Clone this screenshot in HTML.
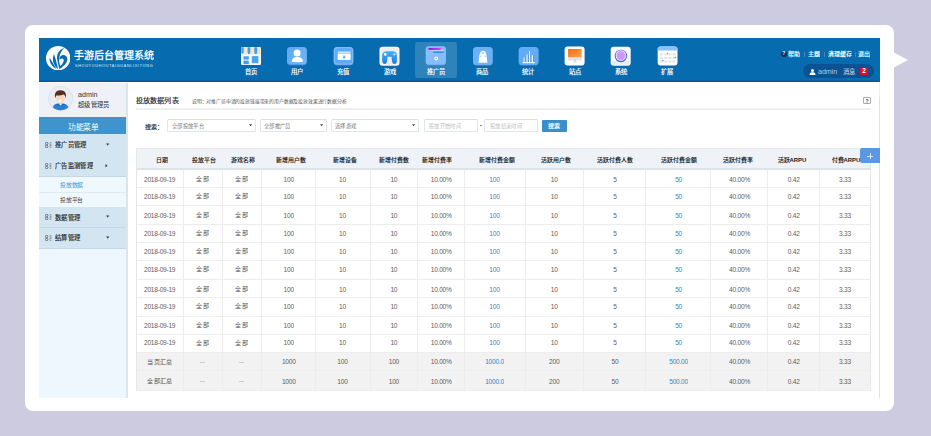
<!DOCTYPE html><html lang="zh-CN"><head><meta charset="utf-8"><style>
*{margin:0;padding:0;box-sizing:border-box}
html,body{width:931px;height:436px;overflow:hidden;background:#cccbdf;font-family:"Liberation Sans", sans-serif}
.a{position:absolute}
.t{position:absolute;white-space:nowrap;line-height:1}
</style></head><body>
<div class="a" style="left:25px;top:25px;width:869px;height:386px;background:#fff;border-radius:8px"></div>
<svg class="a" style="left:893px;top:50px" width="16" height="20"><path d="M0 2 L15 10 L0 18 Z" fill="#fff"/></svg>
<div class="a" style="left:39px;top:38px;width:841px;height:44px;background:#066caf"></div>
<div class="a" style="left:39px;top:80px;width:841px;height:2px;background:linear-gradient(#0a62a8,#0452a0)"></div>
<svg class="a" style="left:45.9px;top:45.8px" width="24.4" height="24.4" viewBox="0 0 24 24">
<circle cx="12" cy="12" r="12" fill="#fff"/>
<path d="M17.8 1.8 C13.5 3.5 10.6 7.5 10.9 11.8 C11.1 15.3 12.3 19 13.2 23 C16.5 20 20.8 17.5 21 13 C21.2 10 18.5 8.3 15.8 9 C13.8 9.6 12.8 11.5 13.5 13.5 C14.5 12 16.5 11.8 17.3 13.2 C18 15.5 15.8 18 14 19.8 C13 16.5 12.5 13.5 13.2 10.5 C14 7 15.8 4.3 17.8 1.8Z" fill="#066caf"/>
<path d="M7.8 7.6 Q4.3 16.5 12 23.2 Q10.4 15 7.8 7.6Z" fill="#066caf"/>
<path d="M3.5 11.6 Q3 18.6 10.4 23 Q7.2 17.2 3.5 11.6Z" fill="#066caf"/>
</svg>
<div class="t" style="left:73.75px;top:51.30px;font-size:50px;font-weight:bold;color:#fff;letter-spacing:0.00px;transform:scale(0.2000);transform-origin:0 0;">手游后台管理系统</div>
<div class="t" style="left:74.80px;top:64.15px;font-size:50px;font-weight:normal;color:#e8f0fa;letter-spacing:9.73px;transform:scale(0.0740);transform-origin:0 0;">SHOUYOUHOUTAIGUANLIXITONG</div>
<div class="a" style="left:415px;top:42px;width:42px;height:35.5px;background:rgba(255,255,255,0.16);border-radius:3px"></div>
<svg class="a" style="left:241.0px;top:47px" width="20" height="19" viewBox="0 0 20 19" overflow="visible"><rect x="0" y="0" width="20" height="18" rx="1.5" fill="#fdf9f0"/>
<rect x="0.3" y="0.3" width="19.4" height="6.2" fill="#f6e3c2"/>
<path d="M0.3 0.3 h2.4 v5.3 a1.2 1.2 0 0 1 -2.4 0 Z M6.6 0.3 h2.7 v5.5 a1.35 1.35 0 0 1 -2.7 0 Z M13.3 0.3 h2.8 v5.5 a1.4 1.4 0 0 1 -2.8 0 Z" fill="#3a9ff4"/>
<path d="M2.7 5.6 a1.95 1.95 0 0 0 3.9 0 M9.3 5.8 a2 2 0 0 0 4 0 M16.1 5.8 a1.8 1.8 0 0 0 3.6 0" fill="#f6e3c2"/>
<rect x="2.5" y="9.3" width="5.3" height="3.3" fill="#3aa0f5"/><rect x="2.5" y="13.6" width="5.3" height="3.6" fill="#3aa0f5"/>
<circle cx="4.7" cy="10.9" r="0.6" fill="#ef7a6a"/>
<rect x="10.8" y="9.1" width="6.6" height="7.1" fill="#44a6f6"/></svg>
<div class="t" style="left:230.60px;top:68.55px;width:317.5px;text-align:center;font-size:50px;font-weight:bold;color:#fff;letter-spacing:0.00px;transform:scale(0.1260);transform-origin:0 0;">首页</div>
<svg class="a" style="left:287.3px;top:47px" width="20" height="19" viewBox="0 0 20 19" overflow="visible"><defs><linearGradient id="g1" x1="0" y1="0" x2="1" y2="1"><stop offset="0" stop-color="#5aa6ee"/><stop offset="1" stop-color="#72b9f8"/></linearGradient></defs>
<rect x="0" y="0" width="19.8" height="18.4" rx="3.5" fill="#3f82d2"/><rect x="0" y="0" width="19.8" height="17.6" rx="3.5" fill="url(#g1)"/>
<circle cx="10.1" cy="6.1" r="3.5" fill="#fff"/><path d="M4.8 14.9 C4.8 11.3 7 10.1 10.3 10.1 C13.6 10.1 15.9 11.3 15.9 14.9 Z" fill="#fff"/></svg>
<div class="t" style="left:276.90px;top:68.55px;width:317.5px;text-align:center;font-size:50px;font-weight:bold;color:#fff;letter-spacing:0.00px;transform:scale(0.1260);transform-origin:0 0;">用户</div>
<svg class="a" style="left:333.6px;top:47px" width="20" height="19" viewBox="0 0 20 19" overflow="visible"><rect x="-0.3" y="0" width="19.6" height="18.6" rx="3.5" fill="#4f90dc"/><rect x="-0.3" y="0" width="19.6" height="17.8" rx="3.5" fill="#7cbaf8"/><rect x="1" y="1.2" width="17" height="15.4" rx="2.5" fill="#62a8f2"/>
<rect x="3.7" y="4.6" width="12.9" height="1.1" fill="#fff"/><rect x="3.7" y="6.5" width="12.9" height="6.4" rx="0.4" fill="#fff"/>
<path d="M8.9 8.2 L9.7 9 M11.4 8.2 L10.6 9" stroke="#5aa2ee" stroke-width="0.5"/><ellipse cx="10.15" cy="10.2" rx="1.1" ry="1.3" fill="#5aa2ee"/></svg>
<div class="t" style="left:323.20px;top:68.55px;width:317.5px;text-align:center;font-size:50px;font-weight:bold;color:#fff;letter-spacing:0.00px;transform:scale(0.1260);transform-origin:0 0;">充值</div>
<svg class="a" style="left:379.9px;top:47px" width="20" height="19" viewBox="0 0 20 19" overflow="visible"><defs><linearGradient id="g2" x1="0" y1="0" x2="0" y2="1"><stop offset="0" stop-color="#3fb2fb"/><stop offset="1" stop-color="#1a7ae6"/></linearGradient></defs>
<rect x="-0.5" y="-0.2" width="20" height="19" rx="3" fill="#fdfaf6"/><rect x="0.8" y="1" width="17.5" height="16.6" rx="2" fill="#efece9"/>
<path d="M2.2 8.3 C2.2 5.4 4.3 4.3 6.8 4.3 H12.3 C14.8 4.3 16.9 5.4 16.9 8.3 V13.5 C16.9 16.3 15.6 17 14.4 17 C13 17 12.3 16 12 14 L11.6 9.8 H7.5 L7.1 14 C6.8 16 6.1 17 4.7 17 C3.5 17 2.2 16.3 2.2 13.5 Z" fill="url(#g2)"/>
<circle cx="5.3" cy="7.4" r="1.3" fill="#fff"/><path d="M14.2 5.9 v3 M12.7 7.4 h3" stroke="#e6f4ff" stroke-width="0.6"/></svg>
<div class="t" style="left:369.50px;top:68.55px;width:317.5px;text-align:center;font-size:50px;font-weight:bold;color:#fff;letter-spacing:0.00px;transform:scale(0.1260);transform-origin:0 0;">游戏</div>
<svg class="a" style="left:426.2px;top:47px" width="20" height="19" viewBox="0 0 20 19" overflow="visible"><defs><linearGradient id="g3" x1="0" y1="0" x2="1" y2="0"><stop offset="0" stop-color="#8a1ee0"/><stop offset="0.7" stop-color="#c240e6"/><stop offset="1" stop-color="#f1a6f0"/></linearGradient></defs>
<rect x="-0.3" y="-0.8" width="20.2" height="19.2" rx="3" fill="#4d8ad8"/><rect x="-0.3" y="-0.8" width="20.2" height="18.5" rx="3" fill="#85bcfa"/>
<path d="M2.5 1.1 H16.6 L17.6 3.2 H2.5 Z" fill="url(#g3)"/><rect x="2.5" y="3.2" width="15.2" height="0.7" fill="#c9f0ff"/>
<rect x="7.2" y="4.4" width="10.6" height="1.7" fill="#3d8cf2"/>
<path d="M0 6.6 H19.6" stroke="#a8d0fc" stroke-width="0.4"/>
<circle cx="10.2" cy="11.5" r="1.9" fill="#fff"/><ellipse cx="10.2" cy="11.5" rx="0.5" ry="0.8" fill="#4a7fd0"/></svg>
<div class="t" style="left:415.80px;top:68.55px;width:317.5px;text-align:center;font-size:50px;font-weight:bold;color:#fff;letter-spacing:0.00px;transform:scale(0.1260);transform-origin:0 0;">推广员</div>
<svg class="a" style="left:472.5px;top:47px" width="20" height="19" viewBox="0 0 20 19" overflow="visible"><rect x="0" y="0" width="19.7" height="18.8" rx="3.5" fill="#3f82d2"/><rect x="0" y="0" width="19.7" height="18" rx="3.5" fill="#6cb1f4"/>
<path d="M5.5 15.7 L6.5 7.5 Q6.7 6.6 7.6 6.6 H12.3 Q13.2 6.6 13.4 7.5 L14.4 15.7 Z" fill="#fff"/>
<path d="M7.7 7.2 C7.7 3.6 12.3 3.6 12.3 7.2" stroke="#fff" stroke-width="1.4" fill="none"/>
<circle cx="7.8" cy="9.2" r="0.6" fill="#6cb1f4"/><circle cx="12.1" cy="9.2" r="0.6" fill="#6cb1f4"/></svg>
<div class="t" style="left:462.10px;top:68.55px;width:317.5px;text-align:center;font-size:50px;font-weight:bold;color:#fff;letter-spacing:0.00px;transform:scale(0.1260);transform-origin:0 0;">商品</div>
<svg class="a" style="left:518.8px;top:47px" width="20" height="19" viewBox="0 0 20 19" overflow="visible"><rect x="-0.3" y="0" width="19.8" height="18.8" rx="3.5" fill="#3f82d2"/><rect x="-0.3" y="0" width="19.8" height="18" rx="3.5" fill="#62acf3"/>
<rect x="4.6" y="10.5" width="1.2" height="4.6" fill="#fff"/><rect x="5.8" y="10.5" width="0.5" height="4.6" fill="#2f78d8"/>
<rect x="7.5" y="7.4" width="1.3" height="7.7" fill="#fff"/><rect x="8.8" y="7.4" width="0.5" height="7.7" fill="#2f78d8"/>
<rect x="10.1" y="4" width="1.4" height="11.1" fill="#fff"/><rect x="11.5" y="4" width="0.5" height="11.1" fill="#2f78d8"/>
<rect x="12.8" y="8.2" width="1.3" height="6.9" fill="#fff"/><rect x="14.1" y="8.2" width="0.5" height="6.9" fill="#2f78d8"/>
<rect x="3.6" y="15.1" width="12.2" height="1.1" fill="#fff"/></svg>
<div class="t" style="left:508.40px;top:68.55px;width:317.5px;text-align:center;font-size:50px;font-weight:bold;color:#fff;letter-spacing:0.00px;transform:scale(0.1260);transform-origin:0 0;">统计</div>
<svg class="a" style="left:565.1px;top:47px" width="20" height="19" viewBox="0 0 20 19" overflow="visible"><defs><linearGradient id="g4" x1="0" y1="0" x2="1" y2="1"><stop offset="0" stop-color="#f86a10"/><stop offset="1" stop-color="#fca455"/></linearGradient></defs>
<rect x="-0.4" y="-0.5" width="20" height="19" rx="3" fill="#fdfdfd"/>
<rect x="3.1" y="2" width="13.5" height="8.6" fill="url(#g4)"/><rect x="3.1" y="10.6" width="13.5" height="2.2" fill="#e9e9e9"/>
<path d="M3.1 12.8 H16.6" stroke="#bdbdbd" stroke-width="0.5"/><rect x="9" y="12.8" width="1.8" height="1.8" fill="#d0d0d0"/><rect x="7.8" y="14.8" width="4" height="0.7" fill="#dadada"/></svg>
<div class="t" style="left:554.70px;top:68.55px;width:317.5px;text-align:center;font-size:50px;font-weight:bold;color:#fff;letter-spacing:0.00px;transform:scale(0.1260);transform-origin:0 0;">站点</div>
<svg class="a" style="left:611.4px;top:47px" width="20" height="19" viewBox="0 0 20 19" overflow="visible"><defs><pattern id="p1" width="1.4" height="1.4" patternUnits="userSpaceOnUse"><rect width="1.4" height="1.4" fill="#c88af2"/><circle cx="0.7" cy="0.7" r="0.35" fill="#e9d2fb"/></pattern></defs>
<rect x="-0.3" y="-0.3" width="20" height="19" rx="3" fill="#fbfbfd"/><rect x="1" y="14" width="17.5" height="3.8" fill="#e8ebf2"/>
<circle cx="9.9" cy="9" r="6.2" fill="#3c68d6"/><circle cx="9.9" cy="8.6" r="5.3" fill="#f3ecfc"/><circle cx="9.9" cy="8.6" r="4.4" fill="url(#p1)"/></svg>
<div class="t" style="left:601.00px;top:68.55px;width:317.5px;text-align:center;font-size:50px;font-weight:bold;color:#fff;letter-spacing:0.00px;transform:scale(0.1260);transform-origin:0 0;">系统</div>
<svg class="a" style="left:657.7px;top:47px" width="20" height="19" viewBox="0 0 20 19" overflow="visible"><rect x="-0.3" y="-0.5" width="19.8" height="19" rx="3" fill="#fdfdfe"/>
<path d="M-0.3 2.5 a3 3 0 0 1 3 -3 h13.8 a3 3 0 0 1 3 3 v1 h-19.8 Z" fill="#8fbff8"/>
<g fill="#e1e1e1"><rect x="2" y="6.5" width="3" height="1.8"/><rect x="6.3" y="6.5" width="3" height="1.8"/><rect x="10.5" y="6.5" width="3" height="1.8"/><rect x="14.5" y="6.5" width="3" height="1.8"/>
<rect x="2" y="10" width="3" height="1.8"/><rect x="6.3" y="10" width="3" height="1.8"/><rect x="10.5" y="10" width="3" height="1.8"/><rect x="14.5" y="10" width="3" height="1.8"/>
<rect x="2" y="13.6" width="3" height="1.8"/><rect x="6.3" y="13.6" width="3" height="1.8"/><rect x="10.5" y="13.6" width="3" height="1.8"/><rect x="14.5" y="13.6" width="3" height="1.8"/></g>
<circle cx="9.6" cy="6.5" r="0.7" fill="#5b9cf0"/><circle cx="17.4" cy="10.5" r="0.7" fill="#5b9cf0"/><circle cx="5" cy="13.5" r="0.8" fill="#5b9cf0"/></svg>
<div class="t" style="left:647.30px;top:68.55px;width:317.5px;text-align:center;font-size:50px;font-weight:bold;color:#fff;letter-spacing:0.00px;transform:scale(0.1260);transform-origin:0 0;">扩展</div>
<div class="a" style="left:781px;top:51px;width:5.5px;height:5.5px;border-radius:50%;background:#1c2f4a"></div>
<div class="t" style="left:781px;top:51.4px;width:5.5px;text-align:center;font-size:5px;font-weight:bold;color:#fff">?</div>
<div class="t" style="left:788.35px;top:50.90px;font-size:50px;font-weight:bold;color:#fff;letter-spacing:0.00px;transform:scale(0.1200);transform-origin:0 0;">帮助</div>
<div class="t" style="left:808.15px;top:50.90px;font-size:50px;font-weight:bold;color:#fff;letter-spacing:0.00px;transform:scale(0.1200);transform-origin:0 0;">主题</div>
<div class="t" style="left:827.65px;top:50.90px;font-size:50px;font-weight:bold;color:#fff;letter-spacing:0.00px;transform:scale(0.1200);transform-origin:0 0;">清理缓存</div>
<div class="t" style="left:858.45px;top:50.90px;font-size:50px;font-weight:bold;color:#fff;letter-spacing:0.00px;transform:scale(0.1200);transform-origin:0 0;">退出</div>
<div class="a" style="left:804px;top:51.5px;width:0.6px;height:5px;background:#3d86c4"></div>
<div class="a" style="left:823.7px;top:51.5px;width:0.6px;height:5px;background:#3d86c4"></div>
<div class="a" style="left:854.6px;top:51.5px;width:0.6px;height:5px;background:#3d86c4"></div>
<div class="a" style="left:803px;top:64.4px;width:71px;height:13.3px;border-radius:7px;background:#0b5294"></div>
<svg class="a" style="left:809px;top:68.5px" width="7" height="6" viewBox="0 0 7 6"><circle cx="3.5" cy="1.6" r="1.5" fill="#fff"/><path d="M0.5 6 C0.5 3.6 2 3.3 3.5 3.3 C5 3.3 6.5 3.6 6.5 6Z" fill="#fff"/></svg>
<div class="t" style="left:817.60px;top:68.30px;font-size:50px;font-weight:normal;color:#b5cbe2;letter-spacing:0.00px;transform:scale(0.1400);transform-origin:0 0;">admin</div>
<div class="t" style="left:842.60px;top:68.97px;font-size:50px;font-weight:normal;color:#d3e1f0;letter-spacing:0.00px;transform:scale(0.1250);transform-origin:0 0;">消息</div>
<div class="a" style="left:860px;top:67.8px;width:8px;height:7.5px;background:#e50d0d;border-radius:1px"></div>
<div class="t" style="left:860px;top:68.3px;width:8px;text-align:center;font-size:6.6px;font-weight:bold;color:#fff">2</div>
<div class="a" style="left:39px;top:83px;width:89px;height:315px;background:#eef7fd"></div>
<div class="a" style="left:126px;top:83px;width:2px;height:315px;background:#d9e6ee"></div>
<div class="a" style="left:39px;top:83px;width:87px;height:34px;background:#eef1f8"></div>
<svg class="a" style="left:48px;top:86px" width="25" height="25" viewBox="0 0 25 25">
<circle cx="12.5" cy="12.5" r="12.5" fill="#dfe3e8"/><circle cx="12.5" cy="12.5" r="11.5" fill="#e9ecf0"/>
<path d="M4.8 21.3 C5.6 18.5 8 17.3 12.5 17.3 C17 17.3 19.5 18.5 20.4 21.3 C18.5 23.4 15.5 24.3 12.5 24.3 C9.5 24.3 6.6 23.4 4.8 21.3Z" fill="#2b7fd2"/>
<path d="M8 18.3 C9.5 20 15.5 20 17 18.3 C15.5 17.6 9.5 17.6 8 18.3Z" fill="#1f66b8"/>
<path d="M10.2 17.3 L12.5 19.6 L14.8 17.3 Z" fill="#fdfdfd"/>
<rect x="11" y="15" width="3" height="2.6" fill="#f0c59c"/>
<ellipse cx="12.4" cy="12.3" rx="4.2" ry="4.7" fill="#f9d9b9"/>
<ellipse cx="12" cy="15" rx="2" ry="1.4" fill="#fdf1e6"/>
<path d="M7.3 12.2 C6 7.5 8 4.4 12.3 4.3 C16.6 4.2 18.9 7.2 17.7 12.2 C17.3 10.2 16.6 9.2 15.6 8.6 C13.6 9.6 10.6 9.9 8.6 9.3 C7.9 10.1 7.5 11.1 7.3 12.2Z" fill="#553020"/>
</svg>
<div class="t" style="left:77.60px;top:91.30px;font-size:50px;font-weight:normal;color:#333;letter-spacing:0.00px;transform:scale(0.1440);transform-origin:0 0;">admin</div>
<div class="t" style="left:77.85px;top:101.67px;font-size:50px;font-weight:normal;color:#333;letter-spacing:0.00px;transform:scale(0.1252);transform-origin:0 0;">超级管理员</div>
<div class="a" style="left:39px;top:117px;width:87px;height:17.4px;background:#3e94cb"></div>
<div class="t" style="left:39.80px;top:122.62px;width:561.3px;text-align:center;font-size:50px;font-weight:normal;color:#fff;letter-spacing:0.00px;transform:scale(0.1550);transform-origin:0 0;">功能菜单</div>
<div class="a" style="left:39px;top:134.4px;width:87px;height:21.5px;background:#d3e5f0;border-bottom:1px solid #c3d8e6"></div>
<svg class="a" style="left:45px;top:141.9px" width="7" height="6" viewBox="0 0 7 6"><circle cx="1.6" cy="1.5" r="1.25" fill="none" stroke="#555" stroke-width="0.8"/><circle cx="1.6" cy="4.5" r="1.25" fill="none" stroke="#555" stroke-width="0.8"/><path d="M4.6 0.8h1.8M4.6 2.3h1.8M4.6 3.7h1.8M4.6 5.2h1.8" stroke="#666" stroke-width="0.7"/></svg>
<div class="t" style="left:54.65px;top:142.15px;font-size:50px;font-weight:bold;color:#333;letter-spacing:0.00px;transform:scale(0.1260);transform-origin:0 0;">推广员管理</div>
<svg class="a" style="left:106px;top:142.9px" width="4" height="3"><path d="M0 0.5h3.4L1.7 2.5Z" fill="#333"/></svg>
<div class="a" style="left:39px;top:155.4px;width:87px;height:21.9px;background:#d3e5f0;border-bottom:1px solid #c3d8e6"></div>
<svg class="a" style="left:45px;top:163.1px" width="7" height="6" viewBox="0 0 7 6"><circle cx="1.6" cy="1.5" r="1.25" fill="none" stroke="#555" stroke-width="0.8"/><circle cx="1.6" cy="4.5" r="1.25" fill="none" stroke="#555" stroke-width="0.8"/><path d="M4.6 0.8h1.8M4.6 2.3h1.8M4.6 3.7h1.8M4.6 5.2h1.8" stroke="#666" stroke-width="0.7"/></svg>
<div class="t" style="left:54.65px;top:163.35px;font-size:50px;font-weight:bold;color:#333;letter-spacing:0.00px;transform:scale(0.1260);transform-origin:0 0;">广告监测管理</div>
<svg class="a" style="left:105px;top:164.1px" width="3" height="4"><path d="M0.5 0v3.4L2.5 1.7Z" fill="#333"/></svg>
<div class="a" style="left:39px;top:176.8px;width:87px;height:15.8px;background:#eff8fd;border-bottom:1px solid #e0ecf4"></div>
<div class="t" style="left:59.85px;top:182.00px;font-size:50px;font-weight:normal;color:#3a9ad9;letter-spacing:0.00px;transform:scale(0.1160);transform-origin:0 0;">投放数据</div>
<div class="a" style="left:39px;top:192.6px;width:87px;height:14.4px;background:#eff8fd"></div>
<div class="t" style="left:59.85px;top:196.70px;font-size:50px;font-weight:normal;color:#444;letter-spacing:0.00px;transform:scale(0.1160);transform-origin:0 0;">投放平台</div>
<div class="a" style="left:39px;top:207px;width:87px;height:21.0px;background:#d3e5f0;border-bottom:1px solid #c3d8e6"></div>
<svg class="a" style="left:45px;top:214.25px" width="7" height="6" viewBox="0 0 7 6"><circle cx="1.6" cy="1.5" r="1.25" fill="none" stroke="#555" stroke-width="0.8"/><circle cx="1.6" cy="4.5" r="1.25" fill="none" stroke="#555" stroke-width="0.8"/><path d="M4.6 0.8h1.8M4.6 2.3h1.8M4.6 3.7h1.8M4.6 5.2h1.8" stroke="#666" stroke-width="0.7"/></svg>
<div class="t" style="left:54.65px;top:214.50px;font-size:50px;font-weight:bold;color:#333;letter-spacing:0.00px;transform:scale(0.1260);transform-origin:0 0;">数据管理</div>
<svg class="a" style="left:106px;top:215.25px" width="4" height="3"><path d="M0 0.5h3.4L1.7 2.5Z" fill="#333"/></svg>
<div class="a" style="left:39px;top:227.5px;width:87px;height:21.0px;background:#d3e5f0;border-bottom:1px solid #c3d8e6"></div>
<svg class="a" style="left:45px;top:234.75px" width="7" height="6" viewBox="0 0 7 6"><circle cx="1.6" cy="1.5" r="1.25" fill="none" stroke="#555" stroke-width="0.8"/><circle cx="1.6" cy="4.5" r="1.25" fill="none" stroke="#555" stroke-width="0.8"/><path d="M4.6 0.8h1.8M4.6 2.3h1.8M4.6 3.7h1.8M4.6 5.2h1.8" stroke="#666" stroke-width="0.7"/></svg>
<div class="t" style="left:54.65px;top:235.00px;font-size:50px;font-weight:bold;color:#333;letter-spacing:0.00px;transform:scale(0.1260);transform-origin:0 0;">结算管理</div>
<svg class="a" style="left:106px;top:235.75px" width="4" height="3"><path d="M0 0.5h3.4L1.7 2.5Z" fill="#333"/></svg>
<div class="t" style="left:136.00px;top:97.25px;font-size:50px;font-weight:bold;color:#333;letter-spacing:0.00px;transform:scale(0.1420);transform-origin:0 0;">投放数据列表</div>
<div class="t" style="left:192.20px;top:99.08px;font-size:50px;font-weight:normal;color:#555;letter-spacing:0.00px;transform:scale(0.0966);transform-origin:0 0;">说明：对推广员申请的投放链接带来的用户数据及投放效果进行数据分析</div>
<div class="a" style="left:136px;top:107.9px;width:735px;height:2px;background:#efefef"></div>
<div class="a" style="left:863.4px;top:97px;width:7.2px;height:7.4px;border:0.7px solid #aaa;border-radius:1px"></div>
<div class="t" style="left:863.4px;top:98.6px;width:7.2px;text-align:center;font-size:5px;font-weight:bold;color:#444">?</div>
<div class="a" style="left:879px;top:82px;width:0.8px;height:15px;background:#f0f0f0"></div>
<div class="a" style="left:879px;top:97px;width:0.8px;height:301px;background:#e2e2e2"></div>
<div class="t" style="left:144.85px;top:123.50px;font-size:50px;font-weight:bold;color:#333;letter-spacing:0.00px;transform:scale(0.1200);transform-origin:0 0;">搜索：</div>
<div class="a" style="left:167.4px;top:119.3px;width:88.4px;height:12.4px;border:1px solid #e0e5ea;border-top:1.5px solid #d9dfe5;border-radius:1.5px;background:#fff"></div>
<div class="t" style="left:171.80px;top:124.05px;font-size:50px;font-weight:normal;color:#777;letter-spacing:0.00px;transform:scale(0.1060);transform-origin:0 0;">全部投放平台</div>
<svg class="a" style="left:248.8px;top:124.3px" width="4" height="3"><path d="M0 0.3h3.2L1.6 2.3Z" fill="#444"/></svg>
<div class="a" style="left:260px;top:119.3px;width:66.6px;height:12.4px;border:1px solid #e0e5ea;border-top:1.5px solid #d9dfe5;border-radius:1.5px;background:#fff"></div>
<div class="t" style="left:264.40px;top:124.05px;font-size:50px;font-weight:normal;color:#777;letter-spacing:0.00px;transform:scale(0.1060);transform-origin:0 0;">全部推广员</div>
<svg class="a" style="left:319.6px;top:124.3px" width="4" height="3"><path d="M0 0.3h3.2L1.6 2.3Z" fill="#444"/></svg>
<div class="a" style="left:331px;top:119.3px;width:88px;height:12.4px;border:1px solid #e0e5ea;border-top:1.5px solid #d9dfe5;border-radius:1.5px;background:#fff"></div>
<div class="t" style="left:335.40px;top:124.05px;font-size:50px;font-weight:normal;color:#777;letter-spacing:0.00px;transform:scale(0.1060);transform-origin:0 0;">选择游戏</div>
<svg class="a" style="left:412px;top:124.3px" width="4" height="3"><path d="M0 0.3h3.2L1.6 2.3Z" fill="#444"/></svg>
<div class="a" style="left:423.8px;top:119.3px;width:54px;height:12.4px;border:1px solid #e0e5ea;border-top:1.5px solid #d9dfe5;border-radius:1.5px;background:#fff"></div>
<div class="t" style="left:429.40px;top:124.05px;font-size:50px;font-weight:normal;color:#bdbdbd;letter-spacing:0.00px;transform:scale(0.1060);transform-origin:0 0;">投放开始时间</div>
<div class="a" style="left:480.4px;top:125.3px;width:1.4px;height:0.8px;background:#888"></div>
<div class="a" style="left:484px;top:119.3px;width:53.7px;height:12.4px;border:1px solid #e0e5ea;border-top:1.5px solid #d9dfe5;border-radius:1.5px;background:#fff"></div>
<div class="t" style="left:489.60px;top:124.05px;font-size:50px;font-weight:normal;color:#bdbdbd;letter-spacing:0.00px;transform:scale(0.1060);transform-origin:0 0;">投放结束时间</div>
<div class="a" style="left:542px;top:120px;width:25px;height:11.5px;background:#3a8fcb;border-radius:1px"></div>
<div class="t" style="left:542.00px;top:122.80px;width:208.3px;text-align:center;font-size:50px;font-weight:bold;color:#fff;letter-spacing:0.00px;transform:scale(0.1200);transform-origin:0 0;">搜索</div>
<div class="a" style="left:136px;top:147.5px;width:735px;height:22.5px;background:#eff3f7;border:1px solid #e3e8ec;border-bottom:2px solid #dde3e8"></div>
<div class="t" style="left:132.10px;top:156.75px;width:508.5px;text-align:center;font-size:50px;font-weight:bold;color:#1a1a1a;letter-spacing:0.00px;transform:scale(0.1180);transform-origin:0 0;">日期</div>
<div class="t" style="left:173.70px;top:156.75px;width:508.5px;text-align:center;font-size:50px;font-weight:bold;color:#1a1a1a;letter-spacing:0.00px;transform:scale(0.1180);transform-origin:0 0;">投放平台</div>
<div class="t" style="left:212.60px;top:156.75px;width:508.5px;text-align:center;font-size:50px;font-weight:bold;color:#1a1a1a;letter-spacing:0.00px;transform:scale(0.1180);transform-origin:0 0;">游戏名称</div>
<div class="t" style="left:261.30px;top:156.75px;width:508.5px;text-align:center;font-size:50px;font-weight:bold;color:#1a1a1a;letter-spacing:0.00px;transform:scale(0.1180);transform-origin:0 0;">新增用户数</div>
<div class="t" style="left:315.00px;top:156.75px;width:508.5px;text-align:center;font-size:50px;font-weight:bold;color:#1a1a1a;letter-spacing:0.00px;transform:scale(0.1180);transform-origin:0 0;">新增设备</div>
<div class="t" style="left:363.90px;top:156.75px;width:508.5px;text-align:center;font-size:50px;font-weight:bold;color:#1a1a1a;letter-spacing:0.00px;transform:scale(0.1180);transform-origin:0 0;">新增付费数</div>
<div class="t" style="left:407.30px;top:156.75px;width:508.5px;text-align:center;font-size:50px;font-weight:bold;color:#1a1a1a;letter-spacing:0.00px;transform:scale(0.1180);transform-origin:0 0;">新增付费率</div>
<div class="t" style="left:466.90px;top:156.75px;width:508.5px;text-align:center;font-size:50px;font-weight:bold;color:#1a1a1a;letter-spacing:0.00px;transform:scale(0.1180);transform-origin:0 0;">新增付费金额</div>
<div class="t" style="left:525.50px;top:156.75px;width:508.5px;text-align:center;font-size:50px;font-weight:bold;color:#1a1a1a;letter-spacing:0.00px;transform:scale(0.1180);transform-origin:0 0;">活跃用户数</div>
<div class="t" style="left:584.80px;top:156.75px;width:508.5px;text-align:center;font-size:50px;font-weight:bold;color:#1a1a1a;letter-spacing:0.00px;transform:scale(0.1180);transform-origin:0 0;">活跃付费人数</div>
<div class="t" style="left:649.20px;top:156.75px;width:508.5px;text-align:center;font-size:50px;font-weight:bold;color:#1a1a1a;letter-spacing:0.00px;transform:scale(0.1180);transform-origin:0 0;">活跃付费金额</div>
<div class="t" style="left:708.40px;top:156.75px;width:508.5px;text-align:center;font-size:50px;font-weight:bold;color:#1a1a1a;letter-spacing:0.00px;transform:scale(0.1180);transform-origin:0 0;">活跃付费率</div>
<div class="t" style="left:762.00px;top:156.75px;width:508.5px;text-align:center;font-size:50px;font-weight:bold;color:#1a1a1a;letter-spacing:0.00px;transform:scale(0.1180);transform-origin:0 0;">活跃ARPU</div>
<div class="t" style="left:815.70px;top:156.75px;width:508.5px;text-align:center;font-size:50px;font-weight:bold;color:#1a1a1a;letter-spacing:0.00px;transform:scale(0.1180);transform-origin:0 0;">付费ARPU</div>
<div class="a" style="left:136px;top:170.0px;width:735px;height:17.6px;background:#fff"></div>
<div class="t" style="left:136.12px;top:176.15px;width:358.3px;text-align:center;font-size:50px;font-weight:normal;color:#606060;letter-spacing:-1.89px;transform:scale(0.1320);transform-origin:0 0;">2018-09-19</div>
<div class="t" style="left:183.30px;top:176.43px;width:317.9px;text-align:center;font-size:50px;font-weight:normal;color:#555;letter-spacing:0.00px;transform:scale(0.1230);transform-origin:0 0;">全部</div>
<div class="t" style="left:222.40px;top:176.43px;width:317.9px;text-align:center;font-size:50px;font-weight:normal;color:#555;letter-spacing:0.00px;transform:scale(0.1230);transform-origin:0 0;">全部</div>
<div class="t" style="left:261.62px;top:176.15px;width:405.3px;text-align:center;font-size:50px;font-weight:normal;color:#606060;letter-spacing:-1.89px;transform:scale(0.1320);transform-origin:0 0;">100</div>
<div class="t" style="left:315.12px;top:176.15px;width:416.7px;text-align:center;font-size:50px;font-weight:normal;color:#606060;letter-spacing:-1.89px;transform:scale(0.1320);transform-origin:0 0;">10</div>
<div class="t" style="left:370.12px;top:176.15px;width:361.4px;text-align:center;font-size:50px;font-weight:normal;color:#606060;letter-spacing:-1.89px;transform:scale(0.1320);transform-origin:0 0;">10</div>
<div class="t" style="left:417.82px;top:176.15px;width:350.8px;text-align:center;font-size:50px;font-weight:normal;color:#606060;letter-spacing:-1.89px;transform:scale(0.1320);transform-origin:0 0;">10.00%</div>
<div class="t" style="left:464.12px;top:176.15px;width:462.1px;text-align:center;font-size:50px;font-weight:normal;color:#3186c9;letter-spacing:-1.89px;transform:scale(0.1320);transform-origin:0 0;">100</div>
<div class="t" style="left:525.12px;top:176.15px;width:443.2px;text-align:center;font-size:50px;font-weight:normal;color:#606060;letter-spacing:-1.89px;transform:scale(0.1320);transform-origin:0 0;">10</div>
<div class="t" style="left:583.62px;top:176.15px;width:468.9px;text-align:center;font-size:50px;font-weight:normal;color:#606060;letter-spacing:-1.89px;transform:scale(0.1320);transform-origin:0 0;">5</div>
<div class="t" style="left:645.52px;top:176.15px;width:493.2px;text-align:center;font-size:50px;font-weight:normal;color:#3186c9;letter-spacing:-1.89px;transform:scale(0.1320);transform-origin:0 0;">50</div>
<div class="t" style="left:710.62px;top:176.15px;width:432.6px;text-align:center;font-size:50px;font-weight:normal;color:#606060;letter-spacing:-1.89px;transform:scale(0.1320);transform-origin:0 0;">40.00%</div>
<div class="t" style="left:767.72px;top:176.15px;width:389.4px;text-align:center;font-size:50px;font-weight:normal;color:#606060;letter-spacing:-1.89px;transform:scale(0.1320);transform-origin:0 0;">0.42</div>
<div class="t" style="left:819.12px;top:176.15px;width:393.9px;text-align:center;font-size:50px;font-weight:normal;color:#606060;letter-spacing:-1.89px;transform:scale(0.1320);transform-origin:0 0;">3.33</div>
<div class="a" style="left:136px;top:187.6px;width:735px;height:18.2px;background:#fff"></div>
<div class="t" style="left:136.12px;top:193.15px;width:358.3px;text-align:center;font-size:50px;font-weight:normal;color:#606060;letter-spacing:-1.89px;transform:scale(0.1320);transform-origin:0 0;">2018-09-19</div>
<div class="t" style="left:183.30px;top:193.43px;width:317.9px;text-align:center;font-size:50px;font-weight:normal;color:#555;letter-spacing:0.00px;transform:scale(0.1230);transform-origin:0 0;">全部</div>
<div class="t" style="left:222.40px;top:193.43px;width:317.9px;text-align:center;font-size:50px;font-weight:normal;color:#555;letter-spacing:0.00px;transform:scale(0.1230);transform-origin:0 0;">全部</div>
<div class="t" style="left:261.62px;top:193.15px;width:405.3px;text-align:center;font-size:50px;font-weight:normal;color:#606060;letter-spacing:-1.89px;transform:scale(0.1320);transform-origin:0 0;">100</div>
<div class="t" style="left:315.12px;top:193.15px;width:416.7px;text-align:center;font-size:50px;font-weight:normal;color:#606060;letter-spacing:-1.89px;transform:scale(0.1320);transform-origin:0 0;">10</div>
<div class="t" style="left:370.12px;top:193.15px;width:361.4px;text-align:center;font-size:50px;font-weight:normal;color:#606060;letter-spacing:-1.89px;transform:scale(0.1320);transform-origin:0 0;">10</div>
<div class="t" style="left:417.82px;top:193.15px;width:350.8px;text-align:center;font-size:50px;font-weight:normal;color:#606060;letter-spacing:-1.89px;transform:scale(0.1320);transform-origin:0 0;">10.00%</div>
<div class="t" style="left:464.12px;top:193.15px;width:462.1px;text-align:center;font-size:50px;font-weight:normal;color:#3186c9;letter-spacing:-1.89px;transform:scale(0.1320);transform-origin:0 0;">100</div>
<div class="t" style="left:525.12px;top:193.15px;width:443.2px;text-align:center;font-size:50px;font-weight:normal;color:#606060;letter-spacing:-1.89px;transform:scale(0.1320);transform-origin:0 0;">10</div>
<div class="t" style="left:583.62px;top:193.15px;width:468.9px;text-align:center;font-size:50px;font-weight:normal;color:#606060;letter-spacing:-1.89px;transform:scale(0.1320);transform-origin:0 0;">5</div>
<div class="t" style="left:645.52px;top:193.15px;width:493.2px;text-align:center;font-size:50px;font-weight:normal;color:#3186c9;letter-spacing:-1.89px;transform:scale(0.1320);transform-origin:0 0;">50</div>
<div class="t" style="left:710.62px;top:193.15px;width:432.6px;text-align:center;font-size:50px;font-weight:normal;color:#606060;letter-spacing:-1.89px;transform:scale(0.1320);transform-origin:0 0;">40.00%</div>
<div class="t" style="left:767.72px;top:193.15px;width:389.4px;text-align:center;font-size:50px;font-weight:normal;color:#606060;letter-spacing:-1.89px;transform:scale(0.1320);transform-origin:0 0;">0.42</div>
<div class="t" style="left:819.12px;top:193.15px;width:393.9px;text-align:center;font-size:50px;font-weight:normal;color:#606060;letter-spacing:-1.89px;transform:scale(0.1320);transform-origin:0 0;">3.33</div>
<div class="a" style="left:136px;top:205.8px;width:735px;height:18.4px;background:#fff"></div>
<div class="t" style="left:136.12px;top:211.95px;width:358.3px;text-align:center;font-size:50px;font-weight:normal;color:#606060;letter-spacing:-1.89px;transform:scale(0.1320);transform-origin:0 0;">2018-09-19</div>
<div class="t" style="left:183.30px;top:212.23px;width:317.9px;text-align:center;font-size:50px;font-weight:normal;color:#555;letter-spacing:0.00px;transform:scale(0.1230);transform-origin:0 0;">全部</div>
<div class="t" style="left:222.40px;top:212.23px;width:317.9px;text-align:center;font-size:50px;font-weight:normal;color:#555;letter-spacing:0.00px;transform:scale(0.1230);transform-origin:0 0;">全部</div>
<div class="t" style="left:261.62px;top:211.95px;width:405.3px;text-align:center;font-size:50px;font-weight:normal;color:#606060;letter-spacing:-1.89px;transform:scale(0.1320);transform-origin:0 0;">100</div>
<div class="t" style="left:315.12px;top:211.95px;width:416.7px;text-align:center;font-size:50px;font-weight:normal;color:#606060;letter-spacing:-1.89px;transform:scale(0.1320);transform-origin:0 0;">10</div>
<div class="t" style="left:370.12px;top:211.95px;width:361.4px;text-align:center;font-size:50px;font-weight:normal;color:#606060;letter-spacing:-1.89px;transform:scale(0.1320);transform-origin:0 0;">10</div>
<div class="t" style="left:417.82px;top:211.95px;width:350.8px;text-align:center;font-size:50px;font-weight:normal;color:#606060;letter-spacing:-1.89px;transform:scale(0.1320);transform-origin:0 0;">10.00%</div>
<div class="t" style="left:464.12px;top:211.95px;width:462.1px;text-align:center;font-size:50px;font-weight:normal;color:#3186c9;letter-spacing:-1.89px;transform:scale(0.1320);transform-origin:0 0;">100</div>
<div class="t" style="left:525.12px;top:211.95px;width:443.2px;text-align:center;font-size:50px;font-weight:normal;color:#606060;letter-spacing:-1.89px;transform:scale(0.1320);transform-origin:0 0;">10</div>
<div class="t" style="left:583.62px;top:211.95px;width:468.9px;text-align:center;font-size:50px;font-weight:normal;color:#606060;letter-spacing:-1.89px;transform:scale(0.1320);transform-origin:0 0;">5</div>
<div class="t" style="left:645.52px;top:211.95px;width:493.2px;text-align:center;font-size:50px;font-weight:normal;color:#3186c9;letter-spacing:-1.89px;transform:scale(0.1320);transform-origin:0 0;">50</div>
<div class="t" style="left:710.62px;top:211.95px;width:432.6px;text-align:center;font-size:50px;font-weight:normal;color:#606060;letter-spacing:-1.89px;transform:scale(0.1320);transform-origin:0 0;">40.00%</div>
<div class="t" style="left:767.72px;top:211.95px;width:389.4px;text-align:center;font-size:50px;font-weight:normal;color:#606060;letter-spacing:-1.89px;transform:scale(0.1320);transform-origin:0 0;">0.42</div>
<div class="t" style="left:819.12px;top:211.95px;width:393.9px;text-align:center;font-size:50px;font-weight:normal;color:#606060;letter-spacing:-1.89px;transform:scale(0.1320);transform-origin:0 0;">3.33</div>
<div class="a" style="left:136px;top:224.2px;width:735px;height:18.5px;background:#fff"></div>
<div class="t" style="left:136.12px;top:229.75px;width:358.3px;text-align:center;font-size:50px;font-weight:normal;color:#606060;letter-spacing:-1.89px;transform:scale(0.1320);transform-origin:0 0;">2018-09-19</div>
<div class="t" style="left:183.30px;top:230.03px;width:317.9px;text-align:center;font-size:50px;font-weight:normal;color:#555;letter-spacing:0.00px;transform:scale(0.1230);transform-origin:0 0;">全部</div>
<div class="t" style="left:222.40px;top:230.03px;width:317.9px;text-align:center;font-size:50px;font-weight:normal;color:#555;letter-spacing:0.00px;transform:scale(0.1230);transform-origin:0 0;">全部</div>
<div class="t" style="left:261.62px;top:229.75px;width:405.3px;text-align:center;font-size:50px;font-weight:normal;color:#606060;letter-spacing:-1.89px;transform:scale(0.1320);transform-origin:0 0;">100</div>
<div class="t" style="left:315.12px;top:229.75px;width:416.7px;text-align:center;font-size:50px;font-weight:normal;color:#606060;letter-spacing:-1.89px;transform:scale(0.1320);transform-origin:0 0;">10</div>
<div class="t" style="left:370.12px;top:229.75px;width:361.4px;text-align:center;font-size:50px;font-weight:normal;color:#606060;letter-spacing:-1.89px;transform:scale(0.1320);transform-origin:0 0;">10</div>
<div class="t" style="left:417.82px;top:229.75px;width:350.8px;text-align:center;font-size:50px;font-weight:normal;color:#606060;letter-spacing:-1.89px;transform:scale(0.1320);transform-origin:0 0;">10.00%</div>
<div class="t" style="left:464.12px;top:229.75px;width:462.1px;text-align:center;font-size:50px;font-weight:normal;color:#3186c9;letter-spacing:-1.89px;transform:scale(0.1320);transform-origin:0 0;">100</div>
<div class="t" style="left:525.12px;top:229.75px;width:443.2px;text-align:center;font-size:50px;font-weight:normal;color:#606060;letter-spacing:-1.89px;transform:scale(0.1320);transform-origin:0 0;">10</div>
<div class="t" style="left:583.62px;top:229.75px;width:468.9px;text-align:center;font-size:50px;font-weight:normal;color:#606060;letter-spacing:-1.89px;transform:scale(0.1320);transform-origin:0 0;">5</div>
<div class="t" style="left:645.52px;top:229.75px;width:493.2px;text-align:center;font-size:50px;font-weight:normal;color:#3186c9;letter-spacing:-1.89px;transform:scale(0.1320);transform-origin:0 0;">50</div>
<div class="t" style="left:710.62px;top:229.75px;width:432.6px;text-align:center;font-size:50px;font-weight:normal;color:#606060;letter-spacing:-1.89px;transform:scale(0.1320);transform-origin:0 0;">40.00%</div>
<div class="t" style="left:767.72px;top:229.75px;width:389.4px;text-align:center;font-size:50px;font-weight:normal;color:#606060;letter-spacing:-1.89px;transform:scale(0.1320);transform-origin:0 0;">0.42</div>
<div class="t" style="left:819.12px;top:229.75px;width:393.9px;text-align:center;font-size:50px;font-weight:normal;color:#606060;letter-spacing:-1.89px;transform:scale(0.1320);transform-origin:0 0;">3.33</div>
<div class="a" style="left:136px;top:242.7px;width:735px;height:18.2px;background:#fff"></div>
<div class="t" style="left:136.12px;top:247.65px;width:358.3px;text-align:center;font-size:50px;font-weight:normal;color:#606060;letter-spacing:-1.89px;transform:scale(0.1320);transform-origin:0 0;">2018-09-19</div>
<div class="t" style="left:183.30px;top:247.93px;width:317.9px;text-align:center;font-size:50px;font-weight:normal;color:#555;letter-spacing:0.00px;transform:scale(0.1230);transform-origin:0 0;">全部</div>
<div class="t" style="left:222.40px;top:247.93px;width:317.9px;text-align:center;font-size:50px;font-weight:normal;color:#555;letter-spacing:0.00px;transform:scale(0.1230);transform-origin:0 0;">全部</div>
<div class="t" style="left:261.62px;top:247.65px;width:405.3px;text-align:center;font-size:50px;font-weight:normal;color:#606060;letter-spacing:-1.89px;transform:scale(0.1320);transform-origin:0 0;">100</div>
<div class="t" style="left:315.12px;top:247.65px;width:416.7px;text-align:center;font-size:50px;font-weight:normal;color:#606060;letter-spacing:-1.89px;transform:scale(0.1320);transform-origin:0 0;">10</div>
<div class="t" style="left:370.12px;top:247.65px;width:361.4px;text-align:center;font-size:50px;font-weight:normal;color:#606060;letter-spacing:-1.89px;transform:scale(0.1320);transform-origin:0 0;">10</div>
<div class="t" style="left:417.82px;top:247.65px;width:350.8px;text-align:center;font-size:50px;font-weight:normal;color:#606060;letter-spacing:-1.89px;transform:scale(0.1320);transform-origin:0 0;">10.00%</div>
<div class="t" style="left:464.12px;top:247.65px;width:462.1px;text-align:center;font-size:50px;font-weight:normal;color:#3186c9;letter-spacing:-1.89px;transform:scale(0.1320);transform-origin:0 0;">100</div>
<div class="t" style="left:525.12px;top:247.65px;width:443.2px;text-align:center;font-size:50px;font-weight:normal;color:#606060;letter-spacing:-1.89px;transform:scale(0.1320);transform-origin:0 0;">10</div>
<div class="t" style="left:583.62px;top:247.65px;width:468.9px;text-align:center;font-size:50px;font-weight:normal;color:#606060;letter-spacing:-1.89px;transform:scale(0.1320);transform-origin:0 0;">5</div>
<div class="t" style="left:645.52px;top:247.65px;width:493.2px;text-align:center;font-size:50px;font-weight:normal;color:#3186c9;letter-spacing:-1.89px;transform:scale(0.1320);transform-origin:0 0;">50</div>
<div class="t" style="left:710.62px;top:247.65px;width:432.6px;text-align:center;font-size:50px;font-weight:normal;color:#606060;letter-spacing:-1.89px;transform:scale(0.1320);transform-origin:0 0;">40.00%</div>
<div class="t" style="left:767.72px;top:247.65px;width:389.4px;text-align:center;font-size:50px;font-weight:normal;color:#606060;letter-spacing:-1.89px;transform:scale(0.1320);transform-origin:0 0;">0.42</div>
<div class="t" style="left:819.12px;top:247.65px;width:393.9px;text-align:center;font-size:50px;font-weight:normal;color:#606060;letter-spacing:-1.89px;transform:scale(0.1320);transform-origin:0 0;">3.33</div>
<div class="a" style="left:136px;top:260.9px;width:735px;height:18.2px;background:#fff"></div>
<div class="t" style="left:136.12px;top:265.85px;width:358.3px;text-align:center;font-size:50px;font-weight:normal;color:#606060;letter-spacing:-1.89px;transform:scale(0.1320);transform-origin:0 0;">2018-09-19</div>
<div class="t" style="left:183.30px;top:266.12px;width:317.9px;text-align:center;font-size:50px;font-weight:normal;color:#555;letter-spacing:0.00px;transform:scale(0.1230);transform-origin:0 0;">全部</div>
<div class="t" style="left:222.40px;top:266.12px;width:317.9px;text-align:center;font-size:50px;font-weight:normal;color:#555;letter-spacing:0.00px;transform:scale(0.1230);transform-origin:0 0;">全部</div>
<div class="t" style="left:261.62px;top:265.85px;width:405.3px;text-align:center;font-size:50px;font-weight:normal;color:#606060;letter-spacing:-1.89px;transform:scale(0.1320);transform-origin:0 0;">100</div>
<div class="t" style="left:315.12px;top:265.85px;width:416.7px;text-align:center;font-size:50px;font-weight:normal;color:#606060;letter-spacing:-1.89px;transform:scale(0.1320);transform-origin:0 0;">10</div>
<div class="t" style="left:370.12px;top:265.85px;width:361.4px;text-align:center;font-size:50px;font-weight:normal;color:#606060;letter-spacing:-1.89px;transform:scale(0.1320);transform-origin:0 0;">10</div>
<div class="t" style="left:417.82px;top:265.85px;width:350.8px;text-align:center;font-size:50px;font-weight:normal;color:#606060;letter-spacing:-1.89px;transform:scale(0.1320);transform-origin:0 0;">10.00%</div>
<div class="t" style="left:464.12px;top:265.85px;width:462.1px;text-align:center;font-size:50px;font-weight:normal;color:#3186c9;letter-spacing:-1.89px;transform:scale(0.1320);transform-origin:0 0;">100</div>
<div class="t" style="left:525.12px;top:265.85px;width:443.2px;text-align:center;font-size:50px;font-weight:normal;color:#606060;letter-spacing:-1.89px;transform:scale(0.1320);transform-origin:0 0;">10</div>
<div class="t" style="left:583.62px;top:265.85px;width:468.9px;text-align:center;font-size:50px;font-weight:normal;color:#606060;letter-spacing:-1.89px;transform:scale(0.1320);transform-origin:0 0;">5</div>
<div class="t" style="left:645.52px;top:265.85px;width:493.2px;text-align:center;font-size:50px;font-weight:normal;color:#3186c9;letter-spacing:-1.89px;transform:scale(0.1320);transform-origin:0 0;">50</div>
<div class="t" style="left:710.62px;top:265.85px;width:432.6px;text-align:center;font-size:50px;font-weight:normal;color:#606060;letter-spacing:-1.89px;transform:scale(0.1320);transform-origin:0 0;">40.00%</div>
<div class="t" style="left:767.72px;top:265.85px;width:389.4px;text-align:center;font-size:50px;font-weight:normal;color:#606060;letter-spacing:-1.89px;transform:scale(0.1320);transform-origin:0 0;">0.42</div>
<div class="t" style="left:819.12px;top:265.85px;width:393.9px;text-align:center;font-size:50px;font-weight:normal;color:#606060;letter-spacing:-1.89px;transform:scale(0.1320);transform-origin:0 0;">3.33</div>
<div class="a" style="left:136px;top:279.1px;width:735px;height:18.6px;background:#fff"></div>
<div class="t" style="left:136.12px;top:286.05px;width:358.3px;text-align:center;font-size:50px;font-weight:normal;color:#606060;letter-spacing:-1.89px;transform:scale(0.1320);transform-origin:0 0;">2018-09-19</div>
<div class="t" style="left:183.30px;top:286.32px;width:317.9px;text-align:center;font-size:50px;font-weight:normal;color:#555;letter-spacing:0.00px;transform:scale(0.1230);transform-origin:0 0;">全部</div>
<div class="t" style="left:222.40px;top:286.32px;width:317.9px;text-align:center;font-size:50px;font-weight:normal;color:#555;letter-spacing:0.00px;transform:scale(0.1230);transform-origin:0 0;">全部</div>
<div class="t" style="left:261.62px;top:286.05px;width:405.3px;text-align:center;font-size:50px;font-weight:normal;color:#606060;letter-spacing:-1.89px;transform:scale(0.1320);transform-origin:0 0;">100</div>
<div class="t" style="left:315.12px;top:286.05px;width:416.7px;text-align:center;font-size:50px;font-weight:normal;color:#606060;letter-spacing:-1.89px;transform:scale(0.1320);transform-origin:0 0;">10</div>
<div class="t" style="left:370.12px;top:286.05px;width:361.4px;text-align:center;font-size:50px;font-weight:normal;color:#606060;letter-spacing:-1.89px;transform:scale(0.1320);transform-origin:0 0;">10</div>
<div class="t" style="left:417.82px;top:286.05px;width:350.8px;text-align:center;font-size:50px;font-weight:normal;color:#606060;letter-spacing:-1.89px;transform:scale(0.1320);transform-origin:0 0;">10.00%</div>
<div class="t" style="left:464.12px;top:286.05px;width:462.1px;text-align:center;font-size:50px;font-weight:normal;color:#3186c9;letter-spacing:-1.89px;transform:scale(0.1320);transform-origin:0 0;">100</div>
<div class="t" style="left:525.12px;top:286.05px;width:443.2px;text-align:center;font-size:50px;font-weight:normal;color:#606060;letter-spacing:-1.89px;transform:scale(0.1320);transform-origin:0 0;">10</div>
<div class="t" style="left:583.62px;top:286.05px;width:468.9px;text-align:center;font-size:50px;font-weight:normal;color:#606060;letter-spacing:-1.89px;transform:scale(0.1320);transform-origin:0 0;">5</div>
<div class="t" style="left:645.52px;top:286.05px;width:493.2px;text-align:center;font-size:50px;font-weight:normal;color:#3186c9;letter-spacing:-1.89px;transform:scale(0.1320);transform-origin:0 0;">50</div>
<div class="t" style="left:710.62px;top:286.05px;width:432.6px;text-align:center;font-size:50px;font-weight:normal;color:#606060;letter-spacing:-1.89px;transform:scale(0.1320);transform-origin:0 0;">40.00%</div>
<div class="t" style="left:767.72px;top:286.05px;width:389.4px;text-align:center;font-size:50px;font-weight:normal;color:#606060;letter-spacing:-1.89px;transform:scale(0.1320);transform-origin:0 0;">0.42</div>
<div class="t" style="left:819.12px;top:286.05px;width:393.9px;text-align:center;font-size:50px;font-weight:normal;color:#606060;letter-spacing:-1.89px;transform:scale(0.1320);transform-origin:0 0;">3.33</div>
<div class="a" style="left:136px;top:297.7px;width:735px;height:18.3px;background:#fff"></div>
<div class="t" style="left:136.12px;top:303.05px;width:358.3px;text-align:center;font-size:50px;font-weight:normal;color:#606060;letter-spacing:-1.89px;transform:scale(0.1320);transform-origin:0 0;">2018-09-19</div>
<div class="t" style="left:183.30px;top:303.32px;width:317.9px;text-align:center;font-size:50px;font-weight:normal;color:#555;letter-spacing:0.00px;transform:scale(0.1230);transform-origin:0 0;">全部</div>
<div class="t" style="left:222.40px;top:303.32px;width:317.9px;text-align:center;font-size:50px;font-weight:normal;color:#555;letter-spacing:0.00px;transform:scale(0.1230);transform-origin:0 0;">全部</div>
<div class="t" style="left:261.62px;top:303.05px;width:405.3px;text-align:center;font-size:50px;font-weight:normal;color:#606060;letter-spacing:-1.89px;transform:scale(0.1320);transform-origin:0 0;">100</div>
<div class="t" style="left:315.12px;top:303.05px;width:416.7px;text-align:center;font-size:50px;font-weight:normal;color:#606060;letter-spacing:-1.89px;transform:scale(0.1320);transform-origin:0 0;">10</div>
<div class="t" style="left:370.12px;top:303.05px;width:361.4px;text-align:center;font-size:50px;font-weight:normal;color:#606060;letter-spacing:-1.89px;transform:scale(0.1320);transform-origin:0 0;">10</div>
<div class="t" style="left:417.82px;top:303.05px;width:350.8px;text-align:center;font-size:50px;font-weight:normal;color:#606060;letter-spacing:-1.89px;transform:scale(0.1320);transform-origin:0 0;">10.00%</div>
<div class="t" style="left:464.12px;top:303.05px;width:462.1px;text-align:center;font-size:50px;font-weight:normal;color:#3186c9;letter-spacing:-1.89px;transform:scale(0.1320);transform-origin:0 0;">100</div>
<div class="t" style="left:525.12px;top:303.05px;width:443.2px;text-align:center;font-size:50px;font-weight:normal;color:#606060;letter-spacing:-1.89px;transform:scale(0.1320);transform-origin:0 0;">10</div>
<div class="t" style="left:583.62px;top:303.05px;width:468.9px;text-align:center;font-size:50px;font-weight:normal;color:#606060;letter-spacing:-1.89px;transform:scale(0.1320);transform-origin:0 0;">5</div>
<div class="t" style="left:645.52px;top:303.05px;width:493.2px;text-align:center;font-size:50px;font-weight:normal;color:#3186c9;letter-spacing:-1.89px;transform:scale(0.1320);transform-origin:0 0;">50</div>
<div class="t" style="left:710.62px;top:303.05px;width:432.6px;text-align:center;font-size:50px;font-weight:normal;color:#606060;letter-spacing:-1.89px;transform:scale(0.1320);transform-origin:0 0;">40.00%</div>
<div class="t" style="left:767.72px;top:303.05px;width:389.4px;text-align:center;font-size:50px;font-weight:normal;color:#606060;letter-spacing:-1.89px;transform:scale(0.1320);transform-origin:0 0;">0.42</div>
<div class="t" style="left:819.12px;top:303.05px;width:393.9px;text-align:center;font-size:50px;font-weight:normal;color:#606060;letter-spacing:-1.89px;transform:scale(0.1320);transform-origin:0 0;">3.33</div>
<div class="a" style="left:136px;top:316.0px;width:735px;height:18.6px;background:#fff"></div>
<div class="t" style="left:136.12px;top:321.65px;width:358.3px;text-align:center;font-size:50px;font-weight:normal;color:#606060;letter-spacing:-1.89px;transform:scale(0.1320);transform-origin:0 0;">2018-09-19</div>
<div class="t" style="left:183.30px;top:321.93px;width:317.9px;text-align:center;font-size:50px;font-weight:normal;color:#555;letter-spacing:0.00px;transform:scale(0.1230);transform-origin:0 0;">全部</div>
<div class="t" style="left:222.40px;top:321.93px;width:317.9px;text-align:center;font-size:50px;font-weight:normal;color:#555;letter-spacing:0.00px;transform:scale(0.1230);transform-origin:0 0;">全部</div>
<div class="t" style="left:261.62px;top:321.65px;width:405.3px;text-align:center;font-size:50px;font-weight:normal;color:#606060;letter-spacing:-1.89px;transform:scale(0.1320);transform-origin:0 0;">100</div>
<div class="t" style="left:315.12px;top:321.65px;width:416.7px;text-align:center;font-size:50px;font-weight:normal;color:#606060;letter-spacing:-1.89px;transform:scale(0.1320);transform-origin:0 0;">10</div>
<div class="t" style="left:370.12px;top:321.65px;width:361.4px;text-align:center;font-size:50px;font-weight:normal;color:#606060;letter-spacing:-1.89px;transform:scale(0.1320);transform-origin:0 0;">10</div>
<div class="t" style="left:417.82px;top:321.65px;width:350.8px;text-align:center;font-size:50px;font-weight:normal;color:#606060;letter-spacing:-1.89px;transform:scale(0.1320);transform-origin:0 0;">10.00%</div>
<div class="t" style="left:464.12px;top:321.65px;width:462.1px;text-align:center;font-size:50px;font-weight:normal;color:#3186c9;letter-spacing:-1.89px;transform:scale(0.1320);transform-origin:0 0;">100</div>
<div class="t" style="left:525.12px;top:321.65px;width:443.2px;text-align:center;font-size:50px;font-weight:normal;color:#606060;letter-spacing:-1.89px;transform:scale(0.1320);transform-origin:0 0;">10</div>
<div class="t" style="left:583.62px;top:321.65px;width:468.9px;text-align:center;font-size:50px;font-weight:normal;color:#606060;letter-spacing:-1.89px;transform:scale(0.1320);transform-origin:0 0;">5</div>
<div class="t" style="left:645.52px;top:321.65px;width:493.2px;text-align:center;font-size:50px;font-weight:normal;color:#3186c9;letter-spacing:-1.89px;transform:scale(0.1320);transform-origin:0 0;">50</div>
<div class="t" style="left:710.62px;top:321.65px;width:432.6px;text-align:center;font-size:50px;font-weight:normal;color:#606060;letter-spacing:-1.89px;transform:scale(0.1320);transform-origin:0 0;">40.00%</div>
<div class="t" style="left:767.72px;top:321.65px;width:389.4px;text-align:center;font-size:50px;font-weight:normal;color:#606060;letter-spacing:-1.89px;transform:scale(0.1320);transform-origin:0 0;">0.42</div>
<div class="t" style="left:819.12px;top:321.65px;width:393.9px;text-align:center;font-size:50px;font-weight:normal;color:#606060;letter-spacing:-1.89px;transform:scale(0.1320);transform-origin:0 0;">3.33</div>
<div class="a" style="left:136px;top:334.6px;width:735px;height:18.1px;background:#fff"></div>
<div class="t" style="left:136.12px;top:339.25px;width:358.3px;text-align:center;font-size:50px;font-weight:normal;color:#606060;letter-spacing:-1.89px;transform:scale(0.1320);transform-origin:0 0;">2018-09-19</div>
<div class="t" style="left:183.30px;top:339.53px;width:317.9px;text-align:center;font-size:50px;font-weight:normal;color:#555;letter-spacing:0.00px;transform:scale(0.1230);transform-origin:0 0;">全部</div>
<div class="t" style="left:222.40px;top:339.53px;width:317.9px;text-align:center;font-size:50px;font-weight:normal;color:#555;letter-spacing:0.00px;transform:scale(0.1230);transform-origin:0 0;">全部</div>
<div class="t" style="left:261.62px;top:339.25px;width:405.3px;text-align:center;font-size:50px;font-weight:normal;color:#606060;letter-spacing:-1.89px;transform:scale(0.1320);transform-origin:0 0;">100</div>
<div class="t" style="left:315.12px;top:339.25px;width:416.7px;text-align:center;font-size:50px;font-weight:normal;color:#606060;letter-spacing:-1.89px;transform:scale(0.1320);transform-origin:0 0;">10</div>
<div class="t" style="left:370.12px;top:339.25px;width:361.4px;text-align:center;font-size:50px;font-weight:normal;color:#606060;letter-spacing:-1.89px;transform:scale(0.1320);transform-origin:0 0;">10</div>
<div class="t" style="left:417.82px;top:339.25px;width:350.8px;text-align:center;font-size:50px;font-weight:normal;color:#606060;letter-spacing:-1.89px;transform:scale(0.1320);transform-origin:0 0;">10.00%</div>
<div class="t" style="left:464.12px;top:339.25px;width:462.1px;text-align:center;font-size:50px;font-weight:normal;color:#3186c9;letter-spacing:-1.89px;transform:scale(0.1320);transform-origin:0 0;">100</div>
<div class="t" style="left:525.12px;top:339.25px;width:443.2px;text-align:center;font-size:50px;font-weight:normal;color:#606060;letter-spacing:-1.89px;transform:scale(0.1320);transform-origin:0 0;">10</div>
<div class="t" style="left:583.62px;top:339.25px;width:468.9px;text-align:center;font-size:50px;font-weight:normal;color:#606060;letter-spacing:-1.89px;transform:scale(0.1320);transform-origin:0 0;">5</div>
<div class="t" style="left:645.52px;top:339.25px;width:493.2px;text-align:center;font-size:50px;font-weight:normal;color:#3186c9;letter-spacing:-1.89px;transform:scale(0.1320);transform-origin:0 0;">50</div>
<div class="t" style="left:710.62px;top:339.25px;width:432.6px;text-align:center;font-size:50px;font-weight:normal;color:#606060;letter-spacing:-1.89px;transform:scale(0.1320);transform-origin:0 0;">40.00%</div>
<div class="t" style="left:767.72px;top:339.25px;width:389.4px;text-align:center;font-size:50px;font-weight:normal;color:#606060;letter-spacing:-1.89px;transform:scale(0.1320);transform-origin:0 0;">0.42</div>
<div class="t" style="left:819.12px;top:339.25px;width:393.9px;text-align:center;font-size:50px;font-weight:normal;color:#606060;letter-spacing:-1.89px;transform:scale(0.1320);transform-origin:0 0;">3.33</div>
<div class="a" style="left:136px;top:352.7px;width:735px;height:18.0px;background:#f2f2f2"></div>
<div class="t" style="left:136.00px;top:358.53px;width:384.6px;text-align:center;font-size:50px;font-weight:normal;color:#555;letter-spacing:0.00px;transform:scale(0.1230);transform-origin:0 0;">当页汇总</div>
<div class="t" style="left:183.30px;top:357.70px;width:296.2px;text-align:center;font-size:50px;font-weight:normal;color:#999;letter-spacing:2.27px;transform:scale(0.1320);transform-origin:0 0;">--</div>
<div class="t" style="left:222.40px;top:357.70px;width:296.2px;text-align:center;font-size:50px;font-weight:normal;color:#999;letter-spacing:2.27px;transform:scale(0.1320);transform-origin:0 0;">--</div>
<div class="t" style="left:261.62px;top:358.25px;width:405.3px;text-align:center;font-size:50px;font-weight:normal;color:#606060;letter-spacing:-1.89px;transform:scale(0.1320);transform-origin:0 0;">1000</div>
<div class="t" style="left:315.12px;top:358.25px;width:416.7px;text-align:center;font-size:50px;font-weight:normal;color:#606060;letter-spacing:-1.89px;transform:scale(0.1320);transform-origin:0 0;">100</div>
<div class="t" style="left:370.12px;top:358.25px;width:361.4px;text-align:center;font-size:50px;font-weight:normal;color:#606060;letter-spacing:-1.89px;transform:scale(0.1320);transform-origin:0 0;">100</div>
<div class="t" style="left:417.82px;top:358.25px;width:350.8px;text-align:center;font-size:50px;font-weight:normal;color:#606060;letter-spacing:-1.89px;transform:scale(0.1320);transform-origin:0 0;">10.00%</div>
<div class="t" style="left:464.12px;top:358.25px;width:462.1px;text-align:center;font-size:50px;font-weight:normal;color:#3186c9;letter-spacing:-1.89px;transform:scale(0.1320);transform-origin:0 0;">1000.0</div>
<div class="t" style="left:525.12px;top:358.25px;width:443.2px;text-align:center;font-size:50px;font-weight:normal;color:#606060;letter-spacing:-1.89px;transform:scale(0.1320);transform-origin:0 0;">200</div>
<div class="t" style="left:583.62px;top:358.25px;width:468.9px;text-align:center;font-size:50px;font-weight:normal;color:#606060;letter-spacing:-1.89px;transform:scale(0.1320);transform-origin:0 0;">50</div>
<div class="t" style="left:645.52px;top:358.25px;width:493.2px;text-align:center;font-size:50px;font-weight:normal;color:#3186c9;letter-spacing:-1.89px;transform:scale(0.1320);transform-origin:0 0;">500.00</div>
<div class="t" style="left:710.62px;top:358.25px;width:432.6px;text-align:center;font-size:50px;font-weight:normal;color:#606060;letter-spacing:-1.89px;transform:scale(0.1320);transform-origin:0 0;">40.00%</div>
<div class="t" style="left:767.72px;top:358.25px;width:389.4px;text-align:center;font-size:50px;font-weight:normal;color:#606060;letter-spacing:-1.89px;transform:scale(0.1320);transform-origin:0 0;">0.42</div>
<div class="t" style="left:819.12px;top:358.25px;width:393.9px;text-align:center;font-size:50px;font-weight:normal;color:#606060;letter-spacing:-1.89px;transform:scale(0.1320);transform-origin:0 0;">3.33</div>
<div class="a" style="left:136px;top:370.7px;width:735px;height:19.9px;background:#f2f2f2"></div>
<div class="t" style="left:136.00px;top:377.82px;width:384.6px;text-align:center;font-size:50px;font-weight:normal;color:#555;letter-spacing:0.00px;transform:scale(0.1230);transform-origin:0 0;">全部汇总</div>
<div class="t" style="left:183.30px;top:377.00px;width:296.2px;text-align:center;font-size:50px;font-weight:normal;color:#999;letter-spacing:2.27px;transform:scale(0.1320);transform-origin:0 0;">--</div>
<div class="t" style="left:222.40px;top:377.00px;width:296.2px;text-align:center;font-size:50px;font-weight:normal;color:#999;letter-spacing:2.27px;transform:scale(0.1320);transform-origin:0 0;">--</div>
<div class="t" style="left:261.62px;top:377.55px;width:405.3px;text-align:center;font-size:50px;font-weight:normal;color:#606060;letter-spacing:-1.89px;transform:scale(0.1320);transform-origin:0 0;">1000</div>
<div class="t" style="left:315.12px;top:377.55px;width:416.7px;text-align:center;font-size:50px;font-weight:normal;color:#606060;letter-spacing:-1.89px;transform:scale(0.1320);transform-origin:0 0;">100</div>
<div class="t" style="left:370.12px;top:377.55px;width:361.4px;text-align:center;font-size:50px;font-weight:normal;color:#606060;letter-spacing:-1.89px;transform:scale(0.1320);transform-origin:0 0;">100</div>
<div class="t" style="left:417.82px;top:377.55px;width:350.8px;text-align:center;font-size:50px;font-weight:normal;color:#606060;letter-spacing:-1.89px;transform:scale(0.1320);transform-origin:0 0;">10.00%</div>
<div class="t" style="left:464.12px;top:377.55px;width:462.1px;text-align:center;font-size:50px;font-weight:normal;color:#3186c9;letter-spacing:-1.89px;transform:scale(0.1320);transform-origin:0 0;">1000.0</div>
<div class="t" style="left:525.12px;top:377.55px;width:443.2px;text-align:center;font-size:50px;font-weight:normal;color:#606060;letter-spacing:-1.89px;transform:scale(0.1320);transform-origin:0 0;">200</div>
<div class="t" style="left:583.62px;top:377.55px;width:468.9px;text-align:center;font-size:50px;font-weight:normal;color:#606060;letter-spacing:-1.89px;transform:scale(0.1320);transform-origin:0 0;">50</div>
<div class="t" style="left:645.52px;top:377.55px;width:493.2px;text-align:center;font-size:50px;font-weight:normal;color:#3186c9;letter-spacing:-1.89px;transform:scale(0.1320);transform-origin:0 0;">500.00</div>
<div class="t" style="left:710.62px;top:377.55px;width:432.6px;text-align:center;font-size:50px;font-weight:normal;color:#606060;letter-spacing:-1.89px;transform:scale(0.1320);transform-origin:0 0;">40.00%</div>
<div class="t" style="left:767.72px;top:377.55px;width:389.4px;text-align:center;font-size:50px;font-weight:normal;color:#606060;letter-spacing:-1.89px;transform:scale(0.1320);transform-origin:0 0;">0.42</div>
<div class="t" style="left:819.12px;top:377.55px;width:393.9px;text-align:center;font-size:50px;font-weight:normal;color:#606060;letter-spacing:-1.89px;transform:scale(0.1320);transform-origin:0 0;">3.33</div>
<div class="a" style="left:136px;top:187.1px;width:735px;height:1px;background:#ededed"></div>
<div class="a" style="left:136px;top:205.3px;width:735px;height:1px;background:#ededed"></div>
<div class="a" style="left:136px;top:223.7px;width:735px;height:1px;background:#ededed"></div>
<div class="a" style="left:136px;top:242.2px;width:735px;height:1px;background:#ededed"></div>
<div class="a" style="left:136px;top:260.4px;width:735px;height:1px;background:#ededed"></div>
<div class="a" style="left:136px;top:278.6px;width:735px;height:1px;background:#ededed"></div>
<div class="a" style="left:136px;top:297.2px;width:735px;height:1px;background:#ededed"></div>
<div class="a" style="left:136px;top:315.5px;width:735px;height:1px;background:#ededed"></div>
<div class="a" style="left:136px;top:334.1px;width:735px;height:1px;background:#ededed"></div>
<div class="a" style="left:136px;top:352.2px;width:735px;height:1px;background:#ededed"></div>
<div class="a" style="left:136px;top:370.2px;width:735px;height:1px;background:#ededed"></div>
<div class="a" style="left:136px;top:390.1px;width:735px;height:1px;background:#ededed"></div>
<div class="a" style="left:182.8px;top:170px;width:1px;height:220.6px;background:#ececec"></div>
<div class="a" style="left:221.9px;top:170px;width:1px;height:220.6px;background:#ececec"></div>
<div class="a" style="left:261.0px;top:170px;width:1px;height:220.6px;background:#ececec"></div>
<div class="a" style="left:314.5px;top:170px;width:1px;height:220.6px;background:#ececec"></div>
<div class="a" style="left:369.5px;top:170px;width:1px;height:220.6px;background:#ececec"></div>
<div class="a" style="left:417.2px;top:170px;width:1px;height:220.6px;background:#ececec"></div>
<div class="a" style="left:463.5px;top:170px;width:1px;height:220.6px;background:#ececec"></div>
<div class="a" style="left:524.5px;top:170px;width:1px;height:220.6px;background:#ececec"></div>
<div class="a" style="left:583.0px;top:170px;width:1px;height:220.6px;background:#ececec"></div>
<div class="a" style="left:644.9px;top:170px;width:1px;height:220.6px;background:#ececec"></div>
<div class="a" style="left:710.0px;top:170px;width:1px;height:220.6px;background:#ececec"></div>
<div class="a" style="left:767.1px;top:170px;width:1px;height:220.6px;background:#ececec"></div>
<div class="a" style="left:818.5px;top:170px;width:1px;height:220.6px;background:#ececec"></div>
<div class="a" style="left:135.5px;top:147.5px;width:1px;height:243px;background:#e6e6e6"></div>
<div class="a" style="left:870.3px;top:147.5px;width:1px;height:243px;background:#e6e6e6"></div>
<div class="a" style="left:860.2px;top:148.1px;width:19.4px;height:15.4px;background:#5c97e1;border-radius:2px 0 0 2px"></div>
<div class="a" style="left:867px;top:155.8px;width:6px;height:0.9px;background:rgba(255,255,255,0.75)"></div>
<div class="a" style="left:869.55px;top:153.4px;width:0.9px;height:5.8px;background:rgba(255,255,255,0.75)"></div>
</body></html>
